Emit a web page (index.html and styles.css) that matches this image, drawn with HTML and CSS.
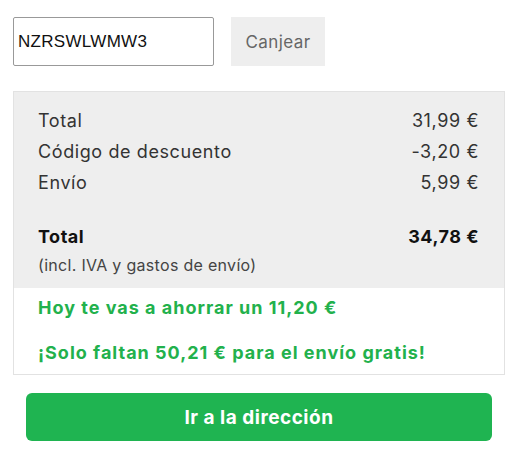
FILE: index.html
```html
<!DOCTYPE html>
<html lang="es">
<head>
<meta charset="utf-8">
<link rel="stylesheet" href="styles.css">
</head>
<body>
<div class="page">
  <div class="coupon">
    <input class="coupon-input" type="text" value="NZRSWLWMW3">
    <button class="coupon-btn">Canjear</button>
  </div>
  <div class="summary">
    <div class="summary-gray">
      <div class="row"><span>Total</span><span>31,99 €</span></div>
      <div class="row"><span>Código de descuento</span><span>-3,20 €</span></div>
      <div class="row"><span>Envío</span><span>5,99 €</span></div>
      <div class="row total"><span>Total</span><span>34,78 €</span></div>
      <div class="note">(incl. IVA y gastos de envío)</div>
    </div>
    <div class="summary-white">
      <div class="green">Hoy te vas a ahorrar un 11,20 €</div>
      <div class="green">¡Solo faltan 50,21 € para el envío gratis!</div>
    </div>
  </div>
  <button class="cta">Ir a la dirección</button>
</div>
</body>
</html>
```
FILE: styles.css
```css
* { box-sizing: border-box; }
body {
  margin: 0;
  background: #fff;
  font-family: Inter, Lato, sans-serif;
  color: #333;
}
.page {
  padding: 17px 18px 0 13px;
  display: flex;
  flex-direction: column;
}
.coupon {
  display: flex;
  gap: 17px;
  align-items: stretch;
  height: 49px;
}
.coupon-input {
  width: 201px;
  height: 49px;
  border: 1px solid #999;
  border-radius: 2px;
  padding: 0 4px;
  font-family: "Liberation Sans", Arial, sans-serif;
  font-size: 17px;
  letter-spacing: 0.3px;
  color: #111;
  background: #fff;
}
.coupon-btn {
  width: 94px;
  border: none;
  background: #eeeeee;
  color: #666;
  font-family: Inter, sans-serif;
  font-size: 17px;
  letter-spacing: 0.4px;
  padding: 0;
}
.summary {
  margin-top: 25px;
  border: 1px solid #e2e2e2;
  width: 492px;
}
.summary-gray {
  background: #eeeeee;
  padding: 13px 25px 10px 24px;
}
.row {
  display: flex;
  justify-content: space-between;
  font-size: 18px;
  letter-spacing: 0.6px;
  line-height: 31px;
  color: #333;
}
.row.total {
  margin-top: 23px;
  font-weight: 700;
  letter-spacing: 0.5px;
  color: #111;
}
.note {
  font-size: 16px;
  letter-spacing: 0.3px;
  line-height: 26px;
  color: #444;
}
.summary-white {
  background: #fff;
  padding: 0 24px 1px;
  display: flex;
  flex-direction: column;
  gap: 5px;
}
.green {
  color: #22b14c;
  font-weight: 700;
  font-size: 18px;
  letter-spacing: 1px;
  line-height: 40px;
}
.cta {
  margin: 18px 0 0 13px;
  width: 466px;
  height: 48px;
  border: none;
  border-radius: 6px;
  background: #1fb451;
  color: #fff;
  font-family: Inter, sans-serif;
  font-weight: 700;
  font-size: 19px;
  letter-spacing: 0.5px;
}
```
